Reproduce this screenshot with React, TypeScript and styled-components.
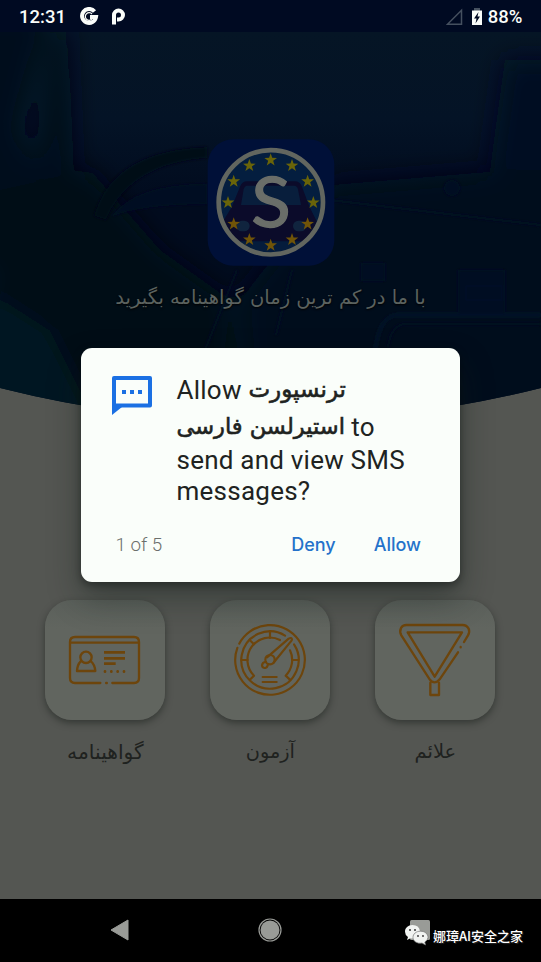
import React from 'react';
import styled, { createGlobalStyle } from 'styled-components';

const GlobalStyle = createGlobalStyle`
  * { box-sizing: border-box; }
  body { margin: 0; background: #000; overflow: hidden; }
`;

const Screen = styled.div`
  position: relative;
  width: 541px;
  height: 962px;
  display: flex;
  flex-direction: column;
  overflow: hidden;
  background: #545652;
  font-family: Roboto, 'DejaVu Sans', sans-serif;
`;

const StatusBar = styled.header`
  height: 32px;
  flex: none;
  display: flex;
  align-items: center;
  justify-content: space-between;
  padding: 2px 18.5px 0 19px;
  background: #000a22;
  color: #fafdfa;
  font-size: 18.5px;
  font-weight: 500;
  line-height: 30px;
`;

const StatusGroup = styled.div<{ $gap: number }>`
  display: flex;
  align-items: center;
  gap: ${(p) => p.$gap}px;
  svg { display: block; }
`;

const Hero = styled.section`
  position: relative;
  flex: none;
  height: 392px;
  display: flex;
  flex-direction: column;
  align-items: center;
  padding-top: 107px;
`;

const HeroScene = styled.svg`
  position: absolute;
  inset: 0;
`;

const Logo = styled.svg`
  position: relative;
  display: block;
`;

const Tagline = styled.p`
  position: relative;
  margin: 18px 0 0;
  color: #5b625f;
  font: 400 19.5px/28px 'DejaVu Sans', sans-serif;
  white-space: nowrap;
  text-shadow: 0 1px 2px #000;
`;

const Tiles = styled.main`
  flex: 1;
  display: grid;
  grid-template-columns: repeat(3, 120px);
  column-gap: 45px;
  justify-content: center;
  align-content: start;
  padding: 176px 0.2px 0 0;
`;

const Tile = styled.div`
  display: flex;
  flex-direction: column;
  align-items: center;
  gap: 18px;
`;

const TileFace = styled.div`
  width: 120px;
  height: 120px;
  border-radius: 27px;
  background: linear-gradient(#5b605b, #61655f 24%);
  box-shadow: 0 3px 7px rgba(20, 25, 22, 0.5);
  svg { display: block; }
`;

const TileLabel = styled.span<{ $size: number }>`
  color: #1f221f;
  font: 400 ${(p) => p.$size}px/28px 'DejaVu Sans', sans-serif;
  white-space: nowrap;
`;

const NavBar = styled.nav`
  height: 63px;
  flex: none;
  display: grid;
  grid-template-columns: 20px 24px 20px;
  justify-content: center;
  align-items: center;
  column-gap: 128px;
  padding: 0 1px 1px 0;
  background: #000;
  svg { display: block; }
`;

const Dialog = styled.div`
  position: absolute;
  left: 81px;
  top: 348px;
  width: 379px;
  height: 234px;
  display: flex;
  flex-direction: column;
  justify-content: space-between;
  padding: 24px 31px 24px 30.5px;
  border-radius: 11px;
  background: #fafefa;
  box-shadow: 0 16px 32px rgba(20, 30, 26, 0.42), 0 3px 9px rgba(0, 0, 0, 0.4);
`;

const DialogBody = styled.div`
  display: flex;
  gap: 25px;
  svg { flex: none; margin-top: 4px; }
`;

const Question = styled.h1`
  margin: 0;
  color: #202321;
  font-size: 26px;
  font-weight: 400;
`;

const Line = styled.span<{ $h: number; $spacing?: number }>`
  display: block;
  height: ${(p) => p.$h}px;
  line-height: ${(p) => p.$h}px;
  letter-spacing: ${(p) => p.$spacing ?? 0}px;
  white-space: nowrap;
`;

const Persian = styled.bdi<{ $size: number }>`
  font-family: 'DejaVu Sans', sans-serif;
  font-size: ${(p) => p.$size}px;
  line-height: 1;
  letter-spacing: 0;
  vertical-align: 2.5px;
  -webkit-text-stroke: 0.6px currentColor;
`;

const DialogFooter = styled.div`
  display: flex;
  align-items: center;
  padding: 0 8px 0 4px;
`;

const Counter = styled.span`
  flex: 1;
  padding-top: 1px;
  color: #6b6f6c;
  font-size: 18.8px;
  font-weight: 300;
  line-height: 26px;
`;

const Action = styled.button`
  border: 0;
  padding: 0;
  margin-left: 38px;
  background: none;
  color: #2472ca;
  font: 500 18px/26px Inter, sans-serif;
`;

const Watermark = styled.div`
  position: absolute;
  right: 18px;
  bottom: 15px;
  display: flex;
  align-items: center;
  gap: 4px;
  color: #fff;
  font: 500 13px/22px 'Noto Sans CJK SC', sans-serif;
  white-space: nowrap;
  text-shadow: 0 0 2px #000, 1px 1px 1px #333;
  svg { display: block; }
`;

const starPoints = (cx: number, cy: number, r: number) =>
  Array.from({ length: 10 }, (_, i) => {
    const radius = i % 2 ? r * 0.4 : r;
    const a = -Math.PI / 2 + (i * Math.PI) / 5;
    return `${(cx + radius * Math.cos(a)).toFixed(1)},${(cy + radius * Math.sin(a)).toFixed(1)}`;
  }).join(' ');

const stars = Array.from({ length: 12 }, (_, i) => {
  const a = (i * Math.PI) / 6;
  return starPoints(241 + 128 * Math.sin(a), 248 - 128 * Math.cos(a), 20);
});

function Scene() {
  return (
    <HeroScene width="541" height="392" viewBox="0 32 541 392">
      <defs>
        <clipPath id="curve"><path d="M0 32H541V388Q270.500 456 0 388Z" /></clipPath>
        <linearGradient id="cabin" x1="0" y1="0" x2="0" y2="1">
          <stop offset="0" stopColor="#051525" />
          <stop offset=".22" stopColor="#041326" />
          <stop offset=".42" stopColor="#010b1e" />
          <stop offset="1" stopColor="#000b1e" />
        </linearGradient>
        <filter id="soft" x="-30%" y="-30%" width="160%" height="160%"><feGaussianBlur stdDeviation="12" /></filter>
        <filter id="faint"><feGaussianBlur stdDeviation="1.500" /></filter>
      </defs>
      <g clipPath="url(#curve)">
        <path d="M0 32H541V430H0Z" fill="url(#cabin)" />
        <g filter="url(#soft)">
          <path d="M-30 10H50L20 130L48 190L0 270H-30Z" fill="#000a1b" />
          <path d="M50 32L35 185L75 200L68 32Z" fill="#010d1a" />
          <path d="M0 190L90 170L160 250L230 300L230 430H-20Z" fill="#010d19" />
          <path d="M-20 285L50 330L100 430H-20Z" fill="#011222" />
          <path d="M330 185L570 165V450H250L240 300Z" fill="#00091e" />
          <path d="M505 60H570V170H490Z" fill="#020e23" />
        </g>
        <g filter="url(#faint)">
          <path d="M94 216Q112 150 207 147V158Q130 164 106 220Z" fill="#000817" />
          <path d="M112 216Q136 184 207 184V204Q145 204 112 216Z" fill="#021022" />
          <path d="M330 200L541 225" stroke="#021024" strokeWidth="2" />
          <path d="M375 352Q379 316 397 315H541" fill="none" stroke="#021229" strokeWidth="3" />
          <path d="M388 347Q391 325 405 324H541" fill="none" stroke="#010d24" strokeWidth="2" />
          <path d="M361 263H385V281H361ZM458 270H505V313H458Z" fill="#010d22" />
          <path d="M466 286H502V300H466Z" fill="none" stroke="#04162c" />
          <path d="M237 270L205 350M292 270L276 335" stroke="#020f25" strokeWidth="2" />
          <circle cx="452" cy="188" r="8" fill="#060a21" />
        </g>
      </g>
    </HeroScene>
  );
}

function AppLogo() {
  return (
    <Logo width="128" height="127" viewBox="50 57 384 381">
      <defs><clipPath id="disc"><circle cx="241.500" cy="247" r="150" /></clipPath></defs>
      <rect x="52" y="58" width="380" height="379" rx="76" fill="#001038" />
      <circle cx="241.500" cy="247" r="152" fill="#041e3f" />
      <g clipPath="url(#disc)">
        <path d="M170 184H314Q328 184 334 198L358 262L382 310L350 378H132L98 304L124 262L150 198Q156 184 170 184Z" fill="#0b0b2a" />
        <path d="M170 197H312Q320 197 323 208L332 255H152L160 208Q163 197 170 197Z" fill="#081e3c" />
        <rect x="138" y="302" width="40" height="32" rx="16" fill="#10243e" />
        <rect x="308" y="302" width="40" height="32" rx="16" fill="#10243e" />
        <path d="M140 364H345V400H140Z" fill="#051c3c" />
      </g>
      <circle cx="241.500" cy="247" r="156.500" fill="none" stroke="#62665f" strokeWidth="14" />
      {stars.map((p, i) => <polygon key={i} points={p} fill={i > 3 && i < 9 ? '#705408' : '#696409'} />)}
      <text
        transform="translate(242 321) scale(1.04 1)"
        textAnchor="middle"
        fontFamily="Lato"
        fontSize="210"
        fontWeight="400"
        fill="#6a6e69"
        stroke="#6a6e69"
        strokeWidth="4"
      >S</text>
    </Logo>
  );
}

function CardIcon() {
  return (
    <svg width="120" height="120" viewBox="48 30 360 360" fill="none" stroke="#6d450c" strokeWidth="7" strokeLinecap="round">
      <path d="M214 279H138Q123 279 123 264V156Q123 141 138 141H315Q330 141 330 156V264Q330 279 315 279H250M124 158H329" />
      <circle cx="171" cy="202" r="17" />
      <path d="M155 214Q145 224 144 243H199Q197 223 186 214" strokeLinejoin="round" />
      <path d="M225 187H288M225 205H288M225 221H260" strokeWidth="8" strokeLinecap="butt" />
      <path d="M228 244V245M247 244V245M266 244V245M285 244V245M232 279H233" strokeWidth="8" />
    </svg>
  );
}

function GaugeIcon() {
  return (
    <svg width="120" height="120" viewBox="48 30 360 360" fill="none" stroke="#6d450c" strokeWidth="6.500" strokeLinecap="round" strokeLinejoin="round">
      <path d="M135.700 160.900A104.500 104.500 0 1 1 130.100 173.400" />
      <path d="M273.100 136.800A86 86 0 1 0 300.100 163.200" />
      <path d="M258 150A67 67 0 0 0 180 257L169 268M288 181A67 67 0 0 1 275 257L287 268" />
      <path d="M228 125V144M167 150L180 163M143 210H161M294 210H312" />
      <path d="M219 202L284 146Q293 141 294 148Q294 151 290 155L238 219" />
      <circle cx="228" cy="209" r="14" />
      <path d="M216 216Q205 216 204 226Q205 235 214 234Q220 233 222 223" />
      <path d="M206 261H248M206 276H248" />
    </svg>
  );
}

function SignIcon() {
  return (
    <svg width="120" height="120" viewBox="48 30 360 360" fill="none" stroke="#6d450c" strokeWidth="7" strokeLinecap="round" strokeLinejoin="round">
      <path d="M297 187L242 268Q235 277 227 277Q218 277 212 268L127 136Q121 125 126 114Q131 105 142 105H311Q323 105 329 116Q333 125 327 136L315 156" />
      <path d="M146 127H309L227 260Z" />
      <path d="M214 278V315H240V278M305 171V172" />
    </svg>
  );
}

const tiles = [
  { label: 'گواهینامه', size: 20.3, icon: <CardIcon /> },
  { label: 'آزمون', size: 19.3, icon: <GaugeIcon /> },
  { label: 'علائم', size: 19.5, icon: <SignIcon /> },
];

export default function App() {
  return (
    <Screen>
      <GlobalStyle />
      <StatusBar>
        <StatusGroup $gap={13}>
          <span>12:31</span>
          <svg width="46" height="20" viewBox="79 6.500 46 20" fill="none" stroke="#fafdfa">
            <path d="M94.500 11A7 7 0 1 0 96 16.500H90" strokeWidth="4" />
            <path d="M92 13.500A3.800 3.800 0 1 0 92 18.500" strokeWidth="1.200" />
            <path d="M114 24V14.500A4.500 4.500 0 1 1 118.500 19H117" strokeWidth="4" />
          </svg>
        </StatusGroup>
        <StatusGroup $gap={6}>
          <svg width="36" height="18" viewBox="446 7 36 18">
            <path d="M447.500 23.300H461.500V9.300Z" fill="none" stroke="#45505f" strokeWidth="1.500" />
            <path d="M474 7H480V10H474Z" fill="#46515f" />
            <path d="M472 9.500H482V24H472Z" fill="#fafdfa" />
            <path d="M478.500 11L474 17.500H476.500L475.500 22.500L480 15.500H477.500Z" fill="#000a22" />
          </svg>
          <span>88%</span>
        </StatusGroup>
      </StatusBar>
      <Hero>
        <Scene />
        <AppLogo />
        <Tagline dir="rtl">با ما در کم ترین زمان گواهینامه بگیرید</Tagline>
      </Hero>
      <Tiles>
        {tiles.map((t) => (
          <Tile key={t.label}>
            <TileFace>{t.icon}</TileFace>
            <TileLabel dir="rtl" $size={t.size}>{t.label}</TileLabel>
          </Tile>
        ))}
      </Tiles>
      <NavBar>
        <svg width="20" height="22" viewBox="0 0 20 22"><path d="M1 11L18 1V21Z" fill="#999b97" stroke="#999b97" strokeLinejoin="round" /></svg>
        <svg width="24" height="24" viewBox="0 0 24 24"><circle cx="12" cy="12" r="9.500" fill="#999b97" /><circle cx="12" cy="12" r="11" fill="none" stroke="#999b97" strokeWidth="1.200" /></svg>
        <svg width="20" height="20" viewBox="0 0 20 20"><rect width="20" height="20" rx="1.500" fill="#999b97" /></svg>
      </NavBar>
      <Dialog role="dialog">
        <DialogBody>
          <svg width="40" height="40" viewBox="0 0 40 40">
            <path d="M2 2H38V29.500H2Z" fill="none" stroke="#1b70e3" strokeWidth="4" strokeLinejoin="round" />
            <path d="M0 29V39L10 31Z" fill="#1b70e3" />
            <path d="M10 14h4v4h-4zM18 14h4v4h-4zM26 14h4v4h-4z" fill="#1b70e3" />
          </svg>
          <Question>
            <Line $h={37} $spacing={0.25}>Allow <Persian $size={23}>ترنسپورت</Persian></Line>
            <Line $h={36} $spacing={0.25}><Persian $size={22.5}>استیرلسن فارسی</Persian> to</Line>
            <Line $h={31} $spacing={0.22}>send and view SMS</Line>
            <Line $h={31} $spacing={0.25}>messages?</Line>
          </Question>
        </DialogBody>
        <DialogFooter>
          <Counter>1 of 5</Counter>
          <Action>Deny</Action>
          <Action>Allow</Action>
        </DialogFooter>
      </Dialog>
      <Watermark>
        <svg width="24" height="22" viewBox="0 0 24 22">
          <path d="M7.500 0C3 0 0 3 0 6.700Q0 10 3 12L2 15L5.500 13.200Q7 13.600 8.500 13.300L15 6Q14 0 7.500 0Z" fill="#f1f3f1" />
          <path d="M15.500 6.200C11 6.200 8 9 8 12.400C8 16 12 19 17 18L20.500 20L19.800 17Q23 15 23 12.400C23 9 20 6.200 15.500 6.200Z" fill="#f1f3f1" stroke="#777" strokeWidth=".7" />
          <g fill="#333"><circle cx="5" cy="5" r="1" /><circle cx="10" cy="5" r="1" /><circle cx="13" cy="11" r=".9" /><circle cx="18" cy="11" r=".9" /></g>
        </svg>
        <span>娜璋AI安全之家</span>
      </Watermark>
    </Screen>
  );
}
